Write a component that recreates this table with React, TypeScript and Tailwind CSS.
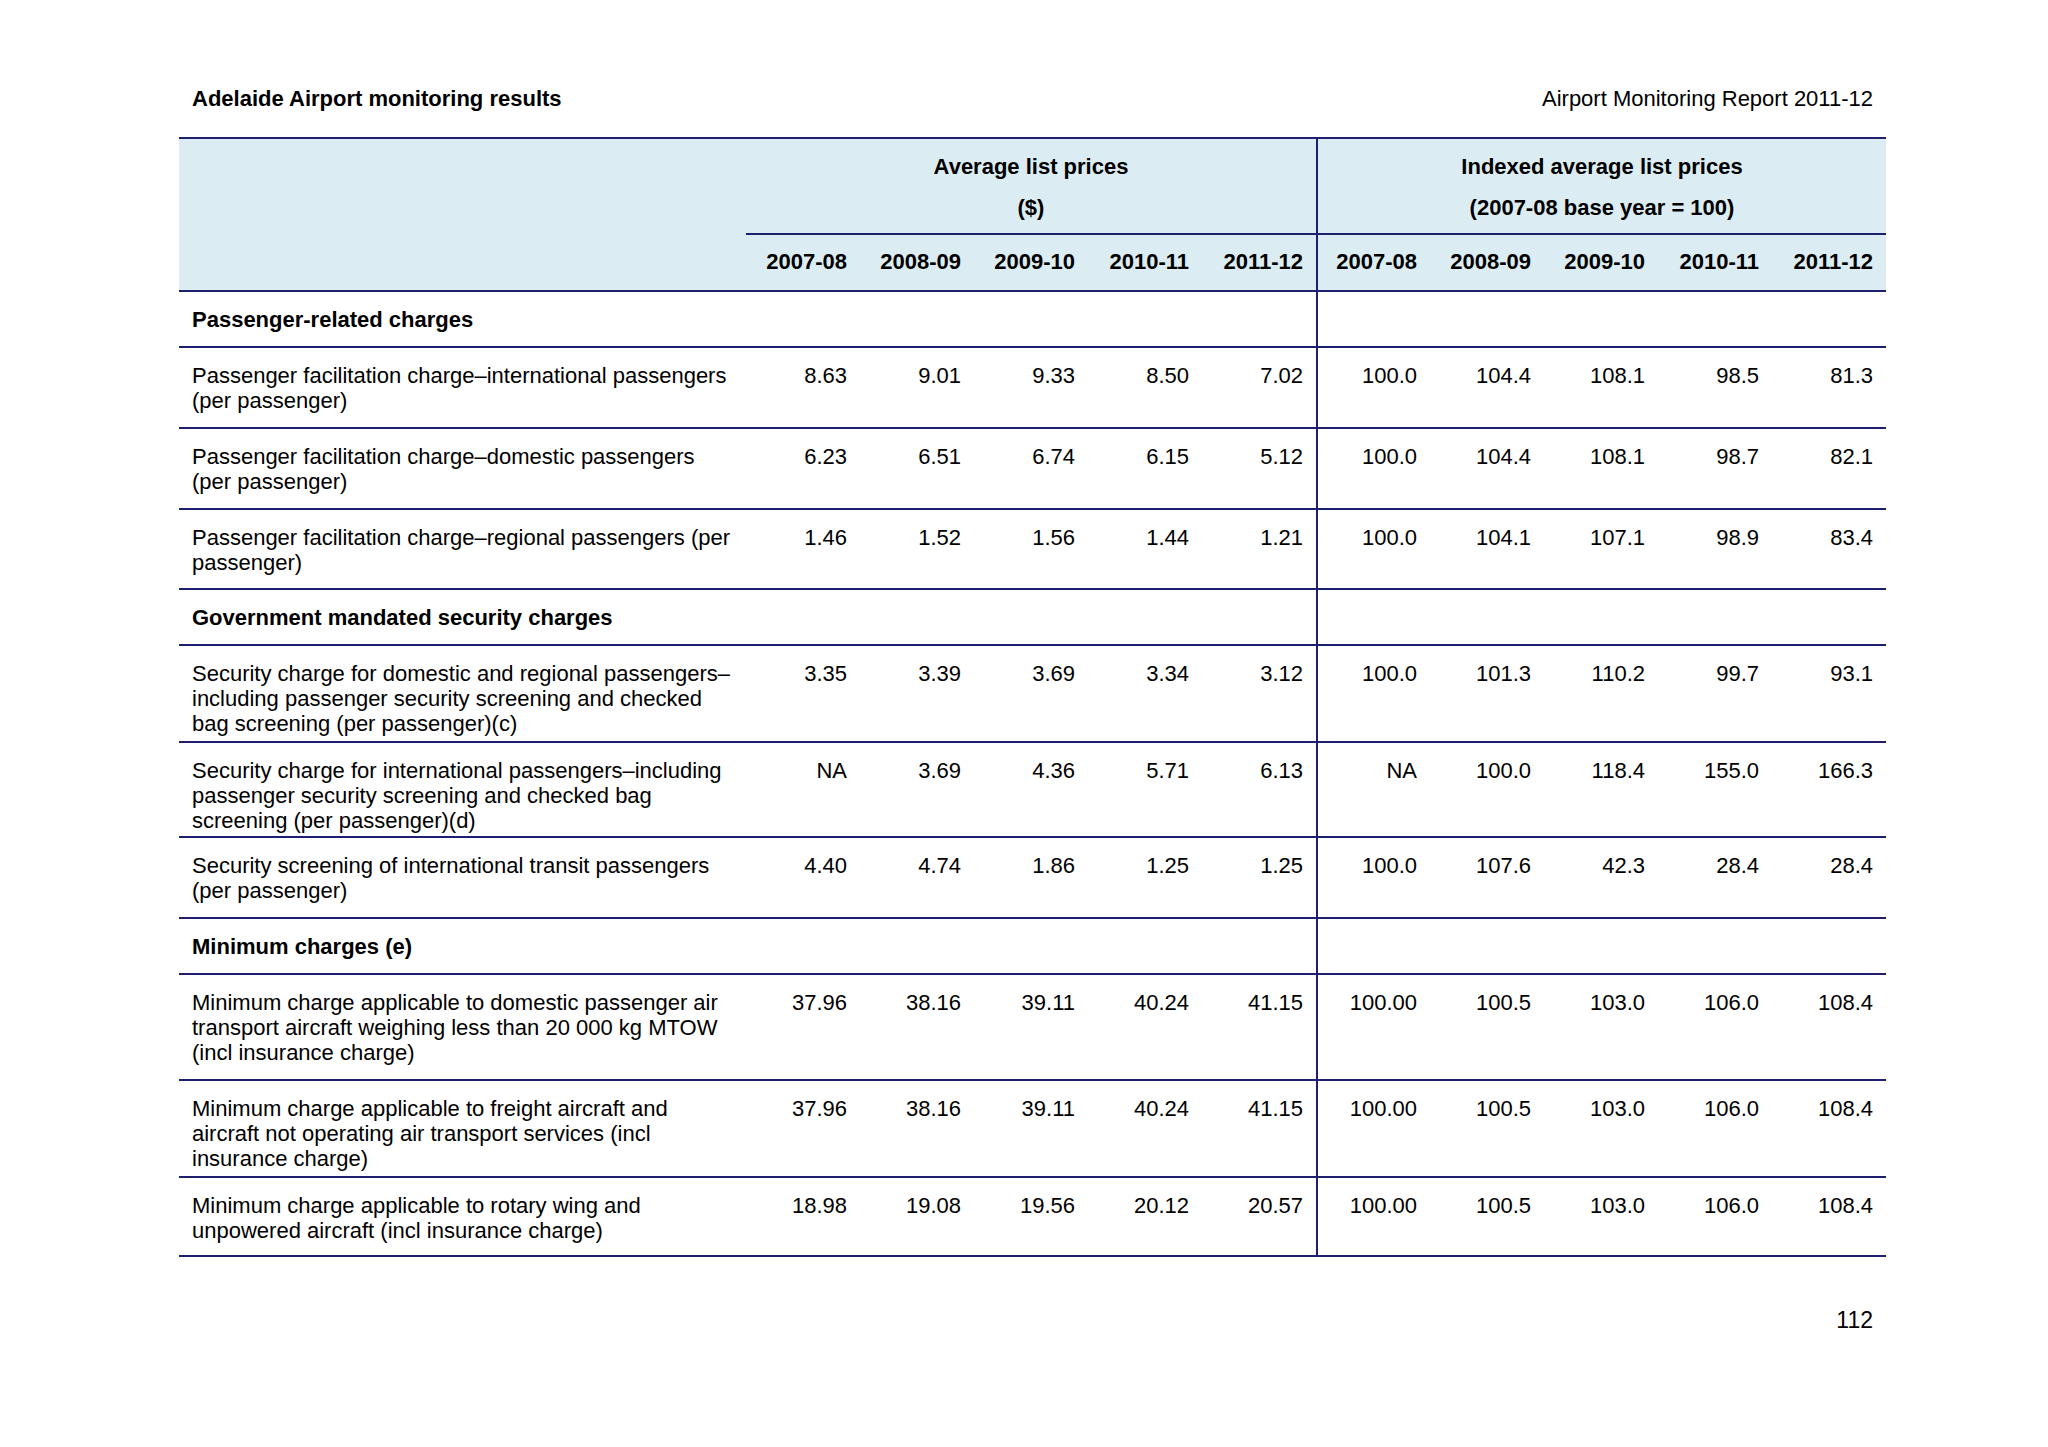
import React from 'react'

const YEARS = ['2007-08', '2008-09', '2009-10', '2010-11', '2011-12']

type Row = { label: string[]; prices: string[]; index: string[]; h: string }
type Section = { title: string; rows: Row[] }

const MIN_INDEX = ['100.00', '100.5', '103.0', '106.0', '108.4']

const sections: Section[] = [
  {
    title: 'Passenger-related charges',
    rows: [
      {
        label: ['Passenger facilitation charge–international passengers', '(per passenger)'],
        prices: ['8.63', '9.01', '9.33', '8.50', '7.02'],
        index: ['100.0', '104.4', '108.1', '98.5', '81.3'],
        h: 'h-[81px]',
      },
      {
        label: ['Passenger facilitation charge–domestic passengers', '(per passenger)'],
        prices: ['6.23', '6.51', '6.74', '6.15', '5.12'],
        index: ['100.0', '104.4', '108.1', '98.7', '82.1'],
        h: 'h-[81px]',
      },
      {
        label: ['Passenger facilitation charge–regional passengers (per', 'passenger)'],
        prices: ['1.46', '1.52', '1.56', '1.44', '1.21'],
        index: ['100.0', '104.1', '107.1', '98.9', '83.4'],
        h: 'h-[80px]',
      },
    ],
  },
  {
    title: 'Government mandated security charges',
    rows: [
      {
        label: [
          'Security charge for domestic and regional passengers–',
          'including passenger security screening and checked',
          'bag screening (per passenger)(c)',
        ],
        prices: ['3.35', '3.39', '3.69', '3.34', '3.12'],
        index: ['100.0', '101.3', '110.2', '99.7', '93.1'],
        h: 'h-[97px]',
      },
      {
        label: [
          'Security charge for international passengers–including',
          'passenger security screening and checked bag',
          'screening (per passenger)(d)',
        ],
        prices: ['NA', '3.69', '4.36', '5.71', '6.13'],
        index: ['NA', '100.0', '118.4', '155.0', '166.3'],
        h: 'h-[95px]',
      },
      {
        label: ['Security screening of international transit passengers', '(per passenger)'],
        prices: ['4.40', '4.74', '1.86', '1.25', '1.25'],
        index: ['100.0', '107.6', '42.3', '28.4', '28.4'],
        h: 'h-[81px]',
      },
    ],
  },
  {
    title: 'Minimum charges (e)',
    rows: [
      {
        label: [
          'Minimum charge applicable to domestic passenger air',
          'transport aircraft weighing less than 20 000 kg MTOW',
          '(incl insurance charge)',
        ],
        prices: ['37.96', '38.16', '39.11', '40.24', '41.15'],
        index: MIN_INDEX,
        h: 'h-[106px]',
      },
      {
        label: [
          'Minimum charge applicable to freight aircraft and',
          'aircraft not operating air transport services (incl',
          'insurance charge)',
        ],
        prices: ['37.96', '38.16', '39.11', '40.24', '41.15'],
        index: MIN_INDEX,
        h: 'h-[97px]',
      },
      {
        label: ['Minimum charge applicable to rotary wing and', 'unpowered aircraft (incl insurance charge)'],
        prices: ['18.98', '19.08', '19.56', '20.12', '20.57'],
        index: MIN_INDEX,
        h: 'h-[79px]',
      },
    ],
  },
]

const line = 'border-[#1f1f70]'

function NumCells({ values, divider }: { values: string[]; divider?: boolean }) {
  return (
    <>
      {values.map((v, i) => (
        <div
          key={i}
          className={`pr-[13px] pt-[15px] text-right ${divider && i === 0 ? `border-l-2 ${line}` : ''}`}
        >
          {v}
        </div>
      ))}
    </>
  )
}

export default function App() {
  const empty = ['', '', '', '', '']
  return (
    <div className="h-[1447px] w-[2048px] bg-white font-['Liberation_Sans',Arial,sans-serif] text-[22px] leading-[25px] text-black">
      <div className="ml-[179px] w-[1707px]">
        {/* page header */}
        <div className="flex h-[137px] justify-between px-[13px] pt-[86px]">
          <span className="font-bold">Adelaide Airport monitoring results</span>
          <span>Airport Monitoring Report 2011-12</span>
        </div>

        {/* table header */}
        <div className={`flex h-[155px] border-y-2 ${line} bg-[#dbecf2] font-bold`}>
          <div className="w-[567px]" />
          <div className="flex w-[1140px] flex-col">
            <div className={`flex h-[96px] border-b-2 ${line}`}>
              <div className="flex w-[570px] flex-col items-center gap-[16px] pt-[15px]">
                <span>Average list prices</span>
                <span>($)</span>
              </div>
              <div className={`flex w-[570px] flex-col items-center gap-[16px] border-l-2 ${line} pt-[15px]`}>
                <span>Indexed average list prices</span>
                <span>(2007-08 base year = 100)</span>
              </div>
            </div>
            <div className="grid flex-1 grid-cols-[repeat(10,114px)]">
              {[...YEARS, ...YEARS].map((y, i) => (
                <div
                  key={i}
                  className={`pr-[13px] pt-[14px] text-right ${i === 5 ? `border-l-2 ${line}` : ''}`}
                >
                  {y}
                </div>
              ))}
            </div>
          </div>
        </div>

        {/* table body */}
        {sections.map((s) => (
          <React.Fragment key={s.title}>
            <div className={`grid h-[56px] grid-cols-[567px_repeat(10,114px)] border-b-2 ${line}`}>
              <div className="pl-[13px] pt-[15px] font-bold">{s.title}</div>
              <NumCells values={empty} />
              <NumCells values={empty} divider />
            </div>
            {s.rows.map((r, idx) => (
              <div
                key={idx}
                className={`grid ${r.h} grid-cols-[567px_repeat(10,114px)] border-b-2 ${line}`}
              >
                <div className="pl-[13px] pt-[15px]">
                  {r.label.map((l) => (
                    <div key={l} className="whitespace-nowrap">
                      {l}
                    </div>
                  ))}
                </div>
                <NumCells values={r.prices} />
                <NumCells values={r.index} divider />
              </div>
            ))}
          </React.Fragment>
        ))}

        <div className="pr-[13px] pt-[51px] text-right text-[23px]">112</div>
      </div>
    </div>
  )
}
